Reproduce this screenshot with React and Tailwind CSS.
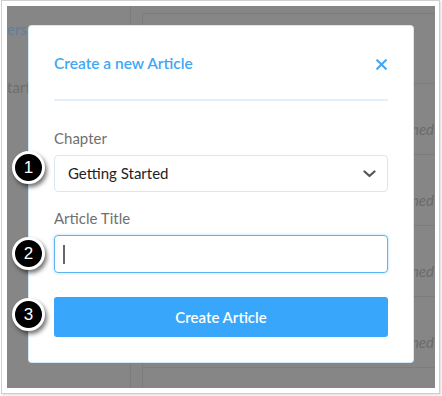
import React from "react";

function Badge({ n, top }) {
  return (
    <div
      className="absolute left-[5px] w-[33px] h-[33px] rounded-full bg-black border-[3px] border-white flex items-center justify-center text-white text-[17px] leading-none shadow-[2px_3px_4px_rgba(0,0,0,0.55)]"
      style={{ top }}
    >
      <span className="font-['Liberation_Sans',Arial,sans-serif]">{n}</span>
    </div>
  );
}

export default function App() {
  const rows = ["Owned", "Assigned", "Assigned", "Assigned"];
  return (
    <div className="w-[442px] h-[396px] bg-white pl-[1px] font-['Lato',sans-serif]">
      <div className="w-[439px] h-[394px] border border-[#cfcfcf] shadow-[1px_1px_2px_rgba(0,0,0,0.15)] pl-[5px] pr-[3px] pt-[5px] pb-[4px]">
        <div className="relative w-[428px] h-[382px] bg-[#868686] overflow-hidden flex">
          {/* background sidebar */}
          <div className="w-[124px] border-r border-[#7c7c7c] flex flex-col pt-[15px]">
            <div className="text-[15px] leading-[16px] text-[#5f7f9a]">ers</div>
            <div className="text-[15px] leading-[16px] text-[#6e6e6e] mt-[42px]">tarted</div>
          </div>
          {/* background main */}
          <div className="flex-1 pl-[11px] pt-[7px]">
            <div className="h-full border-l border-t border-[#7c7c7c] flex flex-col">
              <div className="h-[70px] shrink-0 border-b border-[#7c7c7c]"></div>
              {rows.map((r, i) => (
                <div
                  key={i}
                  className="h-[71px] shrink-0 border-b border-[#7c7c7c] flex items-center justify-end pr-[1px] pt-[20px]"
                >
                  <span className="italic text-[15px] text-[#6b6b6b]">{r}</span>
                </div>
              ))}
            </div>
          </div>

          {/* modal */}
          <div className="absolute left-[22px] top-[20px] w-[384px] h-[336px] bg-white rounded-[3px] shadow-[0_0_0_1px_#d3e8f8] px-[25px] pt-[27px] flex flex-col">
            <div className="flex items-center justify-between h-[22px]">
              <span className="text-[#3fa8f4] text-[15.5px] font-semibold">Create a new Article</span>
              <svg width="11" height="11" viewBox="0 0 11 11" className="mr-[1px]">
                <path d="M1.2 1.2 L9.8 9.8 M9.8 1.2 L1.2 9.8" stroke="#45a9f2" strokeWidth="2.2" strokeLinecap="round" />
              </svg>
            </div>
            <div className="h-[2px] bg-[#e1f0fc] mt-[24px]"></div>
            <div className="mt-[27px] h-[20px] leading-[20px] text-[15px] text-[#707070]">Chapter</div>
            <div className="mt-[7px] h-[37px] border border-[#d6e8f7] rounded-[4px] flex items-center justify-between pl-[13px] pr-[11px]">
              <span className="text-[15px] text-[#1e1e1e]">Getting Started</span>
              <svg width="13" height="8" viewBox="0 0 13 8">
                <path d="M1.5 1.5 L6.5 6 L11.5 1.5" stroke="#555" strokeWidth="2.2" fill="none" strokeLinecap="round" strokeLinejoin="round" />
              </svg>
            </div>
            <div className="mt-[16px] h-[20px] leading-[20px] text-[15px] text-[#707070]">Article Title</div>
            <div className="mt-[7px] h-[38px] border border-[#5cb4f2] rounded-[4px] shadow-[0_0_3px_rgba(92,180,242,0.55)] flex items-center pl-[8px]">
              <div className="w-[2px] h-[19px] bg-[#666]"></div>
            </div>
            <div className="mt-[24px] h-[40px] bg-[#38a6fb] rounded-[3px] flex items-center justify-center text-white text-[15px] font-semibold">
              Create Article
            </div>
          </div>

          <Badge n="1" top={145} />
          <Badge n="2" top={231} />
          <Badge n="3" top={292} />
        </div>
      </div>
    </div>
  );
}
